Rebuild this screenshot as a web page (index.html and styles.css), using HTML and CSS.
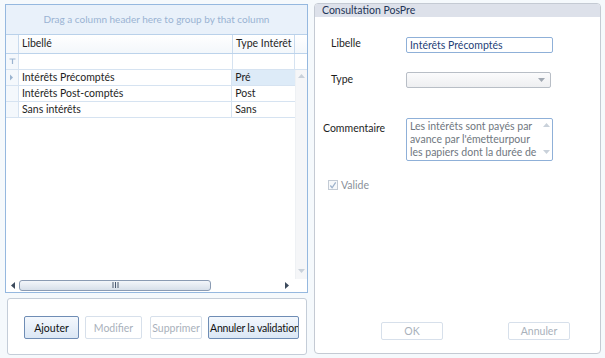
FILE: index.html
```html
<!DOCTYPE html>
<html lang="fr">
<head>
    <meta charset="UTF-8">
    <title>Consultation PosPre</title>
    <link rel="stylesheet" href="styles.css">
</head>
<body>
    <div class="screen">
        <div class="left-side">
            <div class="grid">
                <div class="group-panel">Drag a column header here to group by that column</div>
                <div class="grid-row header-row">
                    <div class="cell indicator"></div>
                    <div class="cell col-lib">Libellé</div>
                    <div class="cell col-type">Type Intérêt</div>
                    <div class="cell col-rest"></div>
                </div>
                <div class="grid-row filter-row">
                    <div class="cell indicator">
                        <svg width="7" height="7" viewBox="0 0 7 7"><path d="M0.5 1h6M3.5 1v5" stroke="#9bb4d0" stroke-width="1.2" fill="none"/></svg>
                    </div>
                    <div class="cell col-lib"></div>
                    <div class="cell col-type"></div>
                    <div class="cell col-rest"></div>
                </div>
                <div class="grid-body">
                    <div class="rows">
                        <div class="grid-row data-row current">
                            <div class="cell indicator">
                                <svg width="5" height="7" viewBox="0 0 5 7"><path d="M1 0.5l3 3-3 3z" fill="#9bb4d0"/></svg>
                            </div>
                            <div class="cell col-lib">Intérêts Précomptés</div>
                            <div class="cell col-type selected">Pré</div>
                        </div>
                        <div class="grid-row data-row">
                            <div class="cell indicator"></div>
                            <div class="cell col-lib">Intérêts Post-comptés</div>
                            <div class="cell col-type">Post</div>
                        </div>
                        <div class="grid-row data-row">
                            <div class="cell indicator"></div>
                            <div class="cell col-lib">Sans intérêts</div>
                            <div class="cell col-type">Sans</div>
                        </div>
                    </div>
                    <div class="vscroll">
                        <svg width="7" height="4" viewBox="0 0 7 4"><path d="M0 4l3.5-4 3.5 4z" fill="#c9d1da"/></svg>
                        <svg width="7" height="4" viewBox="0 0 7 4"><path d="M0 0l3.5 4 3.5-4z" fill="#c9d1da"/></svg>
                    </div>
                </div>
                <div class="hscroll">
                    <svg width="5" height="7" viewBox="0 0 5 7"><path d="M4 0l-4 3.5 4 3.5z" fill="#3c4a5c"/></svg>
                    <div class="thumb">
                        <svg width="7" height="6" viewBox="0 0 7 6"><path d="M1 0v6M3.5 0v6M6 0v6" stroke="#4a5a70" stroke-width="1" fill="none"/></svg>
                    </div>
                    <svg width="5" height="7" viewBox="0 0 5 7"><path d="M1 0l4 3.5-4 3.5z" fill="#3c4a5c"/></svg>
                </div>
            </div>
            <div class="actions">
                <button class="btn btn-add">Ajouter</button>
                <button class="btn btn-edit" disabled>Modifier</button>
                <button class="btn btn-del" disabled>Supprimer</button>
                <button class="btn btn-cancel">Annuler la validation</button>
            </div>
        </div>

        <div class="detail">
            <div class="detail-title">Consultation PosPre</div>
            <div class="form">
                <div class="field field-lib">
                    <label>Libelle</label>
                    <input class="text-input" type="text" value="Intérêts Précomptés">
                </div>
                <div class="field field-type">
                    <label>Type</label>
                    <div class="combo">
                        <svg width="7" height="4" viewBox="0 0 7 4"><path d="M0 0l3.5 4 3.5-4z" fill="#a0a8b2"/></svg>
                    </div>
                </div>
                <div class="field field-comment">
                    <label>Commentaire</label>
                    <div class="memo">
                        <div class="memo-text">Les intérêts sont payés par avance par l'émetteurpour les papiers dont la durée de</div>
                        <div class="memo-scroll">
                            <svg width="7" height="4" viewBox="0 0 7 4"><path d="M0 4l3.5-4 3.5 4z" fill="#c9d1da"/></svg>
                            <svg width="7" height="4" viewBox="0 0 7 4"><path d="M0 0l3.5 4 3.5-4z" fill="#c9d1da"/></svg>
                        </div>
                    </div>
                </div>
                <div class="check">
                    <span class="box">
                        <svg width="9" height="9" viewBox="0 0 9 9"><path d="M1.5 4.5l2 2.5 4-6" stroke="#9db2cc" stroke-width="1.4" fill="none"/></svg>
                    </span>
                    Valide
                </div>
            </div>
            <div class="detail-buttons">
                <button class="btn btn-dialog" disabled>OK</button>
                <button class="btn btn-dialog" disabled>Annuler</button>
            </div>
        </div>
    </div>
</body>
</html>
```

FILE: styles.css
```css
/* Global Styles */
* {
    margin: 0;
    padding: 0;
    box-sizing: border-box;
}

body {
    font-family: Lato, "Open Sans", sans-serif;
    font-size: 10.5px;
    color: #1e1e1e;
    background-color: #f5f9fc;
    width: 605px;
    height: 358px;
    overflow: hidden;
}

.screen {
    display: flex;
    padding: 3px 0 0 5px;
    gap: 6px;
}

/* Left side: grid + action buttons */
.left-side {
    width: 303px;
    display: flex;
    flex-direction: column;
}

.grid {
    margin-top: 1px;
    height: 289px;
    border: 1px solid #95b8df;
    background-color: #fff;
    display: flex;
    flex-direction: column;
}

.group-panel {
    height: 30px;
    background-color: #e9f1fa;
    border-bottom: 1px solid #b9d1ea;
    color: #9ab3d3;
    font-size: 10px;
    text-align: center;
    line-height: 29px;
}

.grid-row {
    display: flex;
    height: 16px;
    border-bottom: 1px solid #d6e3f1;
}

.cell {
    height: 100%;
    padding-left: 3px;
    line-height: 15px;
    white-space: nowrap;
    overflow: hidden;
    border-right: 1px solid #d6e3f1;
}

.indicator {
    width: 13px;
    padding-left: 0;
    display: flex;
    align-items: center;
    justify-content: center;
    background-color: #f4f8fc;
}

.col-lib {
    width: 214px;
}

.col-type {
    width: 62px;
}

.col-rest {
    flex: 1;
    border-right: none;
}

.header-row {
    height: 19px;
    background: linear-gradient(#ffffff, #f3f7fb);
    border-bottom: 1px solid #bcd3eb;
}

.header-row .cell {
    line-height: 17px;
    border-right-color: #c9dbee;
}

.filter-row {
    height: 16px;
}

.grid-body {
    flex: 1;
    display: flex;
}

.rows {
    width: 289px;
}

.data-row .col-type {
    border-right: none;
    width: 63px;
}

.selected {
    background-color: #ddebf8;
}

.vscroll {
    flex: 1;
    display: flex;
    flex-direction: column;
    justify-content: space-between;
    align-items: center;
    padding: 4px 0 6px;
    background-color: #f5f6f8;
    border-left: 1px solid #eef1f4;
}

.hscroll {
    height: 12px;
    margin-bottom: 1px;
    display: flex;
    align-items: center;
    gap: 3px;
    padding-left: 5px;
    background-color: #fff;
}

.thumb {
    width: 192px;
    height: 11px;
    border: 1px solid #8a9bb3;
    border-radius: 3px;
    background: linear-gradient(#f3f6fa, #d7e0ea);
    display: flex;
    align-items: center;
    justify-content: center;
}

.hscroll > svg:last-child {
    margin-left: 70px;
}

.actions {
    margin: 5px 1px 0 2px;
    height: 57px;
    border: 1px solid #c4cdd8;
    border-radius: 3px;
    background-color: #fff;
    display: flex;
    align-items: flex-start;
    padding: 17px 0 0 16px;
    gap: 6px;
}

.btn {
    font-family: inherit;
    font-size: 10.5px;
    height: 23px;
    border: 1px solid #6f8db5;
    border-radius: 2px;
    background: linear-gradient(#f4f8fd 0%, #dbe7f5 100%);
    color: #111;
    white-space: nowrap;
    overflow: hidden;
    cursor: pointer;
}

.btn:disabled {
    border-color: #d7e0eb;
    background: #fff;
    color: #a9b1bb;
    cursor: default;
}

.btn-add {
    width: 55px;
}

.btn-edit {
    width: 57px;
}

.btn-del {
    width: 52px;
    margin-left: 2px;
}

.btn-cancel {
    width: 91px;
    text-align: left;
    padding-left: 1px;
    letter-spacing: -0.2px;
}

/* Right side: detail form */
.detail {
    width: 287px;
    height: 351px;
    border: 1px solid #c4cad3;
    border-radius: 4px;
    background-color: #fff;
    display: flex;
    flex-direction: column;
    overflow: hidden;
}

.detail-title {
    height: 13px;
    background-color: #dde1ea;
    color: #1f3556;
    font-size: 10.5px;
    line-height: 12px;
    padding-left: 7px;
}

.form {
    flex: 1;
    padding-top: 20px;
}

.field {
    display: flex;
    align-items: flex-start;
}

.field label {
    width: 91px;
    padding-left: 16px;
}

.text-input {
    font-family: inherit;
    font-size: 10.5px;
    color: #1f3f78;
    width: 147px;
    height: 16px;
    border: 1px solid #8fb0d8;
    border-radius: 2px;
    padding-left: 3px;
    outline: none;
}

.field-type {
    margin-top: 19px;
}

.field-type label {
    padding-top: 1px;
}

.combo {
    width: 145px;
    height: 16px;
    border: 1px solid #b8bec6;
    border-radius: 2px;
    background: linear-gradient(#fbfbfc, #eeeff1);
    display: flex;
    align-items: center;
    justify-content: flex-end;
    padding-right: 5px;
}

.field-comment {
    margin-top: 30px;
}

.field-comment label {
    padding-left: 8px;
    padding-top: 4px;
}

.memo {
    width: 147px;
    height: 43px;
    border: 1px solid #8fb0d8;
    border-radius: 2px;
    display: flex;
    overflow: hidden;
}

.memo-text {
    flex: 1;
    font-size: 10.5px;
    line-height: 13px;
    color: #6f7780;
    padding: 1px 0 0 3px;
}

.memo-scroll {
    width: 11px;
    display: flex;
    flex-direction: column;
    justify-content: space-between;
    align-items: center;
    padding: 4px 0 6px;
}

.check {
    margin: 18px 0 0 13px;
    display: flex;
    align-items: center;
    gap: 3px;
    color: #8a9099;
}

.box {
    width: 10px;
    height: 10px;
    border: 1px solid #c3cbd5;
    background-color: #f6f8fa;
    display: flex;
    align-items: center;
    justify-content: center;
}

.detail-buttons {
    display: flex;
    padding: 0 0 13px 66px;
    gap: 65px;
}

.btn-dialog {
    width: 62px;
    height: 18px;
}
```
